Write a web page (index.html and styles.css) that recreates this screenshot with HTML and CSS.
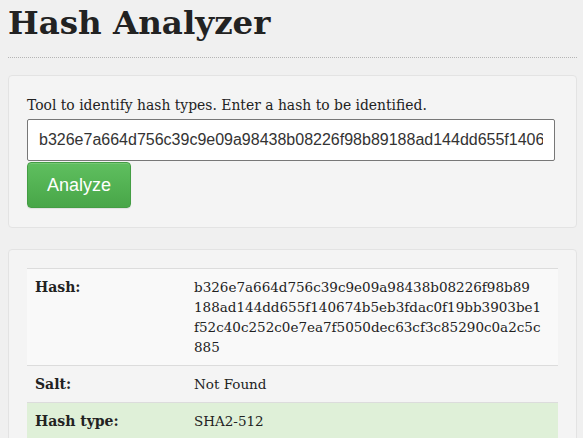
FILE: index.html
```html
<!DOCTYPE html>
<html>
<head>
<meta charset="utf-8">
<link rel="stylesheet" href="styles.css">
</head>
<body>
<h1 class="title">Hash Analyzer</h1>
<hr class="sep">
<div class="panel form-panel">
  <label class="lead" for="hash">Tool to identify hash types. Enter a hash to be identified.</label>
  <input class="hash-input" id="hash" type="text" value="b326e7a664d756c39c9e09a98438b08226f98b89188ad144dd655f140674b5eb3fdac0f19bb3903be1f52c40c252c0e7ea7f5050dec63cf3c85290c0a2c5c885">
  <button class="btn">Analyze</button>
</div>
<div class="panel result-panel">
  <table class="result">
    <tr class="row striped">
      <th>Hash:</th>
      <td class="hash-val">b326e7a664d756c39c9e09a98438b08226f98b89<br>188ad144dd655f140674b5eb3fdac0f19bb3903be1<br>f52c40c252c0e7ea7f5050dec63cf3c85290c0a2c5c<br>885</td>
    </tr>
    <tr class="row">
      <th>Salt:</th>
      <td>Not Found</td>
    </tr>
    <tr class="row success">
      <th>Hash type:</th>
      <td>SHA2-512</td>
    </tr>
  </table>
</div>
</body>
</html>
```
FILE: styles.css
```css
html, body { margin: 0; padding: 0; }
body {
  background: #f0f0f0;
  font-family: "DejaVu Serif", Georgia, serif;
  color: #222;
  padding: 0 6px 0 8px;
  overflow: hidden;
}
.title {
  margin: 0;
  padding-top: 4px;
  font-size: 32.5px;
  line-height: 38px;
  font-weight: bold;
  color: #222;
}
.sep {
  border: 0;
  border-top: 1px dotted #b5b5b5;
  margin: 15px 0 17px 0;
}
.panel {
  background: #f4f4f4;
  border: 1px solid #e3e3e3;
  border-radius: 4px;
}
.form-panel {
  padding: 19px 18px 19px 18px;
  display: flex;
  flex-direction: column;
  align-items: flex-start;
}
.lead {
  font-size: 13.9px;
  line-height: 20px;
  color: #222;
  margin-bottom: 4px;
}
.hash-input {
  box-sizing: border-box;
  width: 528px;
  height: 42px;
  border: 1px solid #777;
  border-radius: 2px;
  background: #fff;
  padding: 0 11px;
  font-family: "Liberation Sans", Arial, sans-serif;
  font-size: 16px;
  color: #333;
  outline: none;
}
.btn {
  margin-top: 1px;
  width: 104px;
  height: 46px;
  border: 1px solid #449d44;
  border-radius: 4px;
  background: linear-gradient(#5fbf5f, #48a648);
  color: #fff;
  font-family: "Liberation Sans", Arial, sans-serif;
  font-size: 18px;
  box-shadow: inset 0 1px 0 rgba(255,255,255,0.15), 0 1px 1px rgba(0,0,0,0.08);
}
.result-panel {
  margin-top: 21px;
  padding: 18px 18px 0 18px;
  height: 200px;
}
.result {
  width: 531px;
  border-collapse: collapse;
  font-size: 13.5px;
  line-height: 20px;
}
.result th, .result td {
  border-top: 1px solid #dcdcdc;
  padding: 8px;
  text-align: left;
  vertical-align: top;
}
.result th { width: 143px; font-weight: bold; font-size: 14px; }
.hash-val { word-break: break-all; }
.striped { background: #f9f9f9; }
.success { background: #dff0d8; }
```
